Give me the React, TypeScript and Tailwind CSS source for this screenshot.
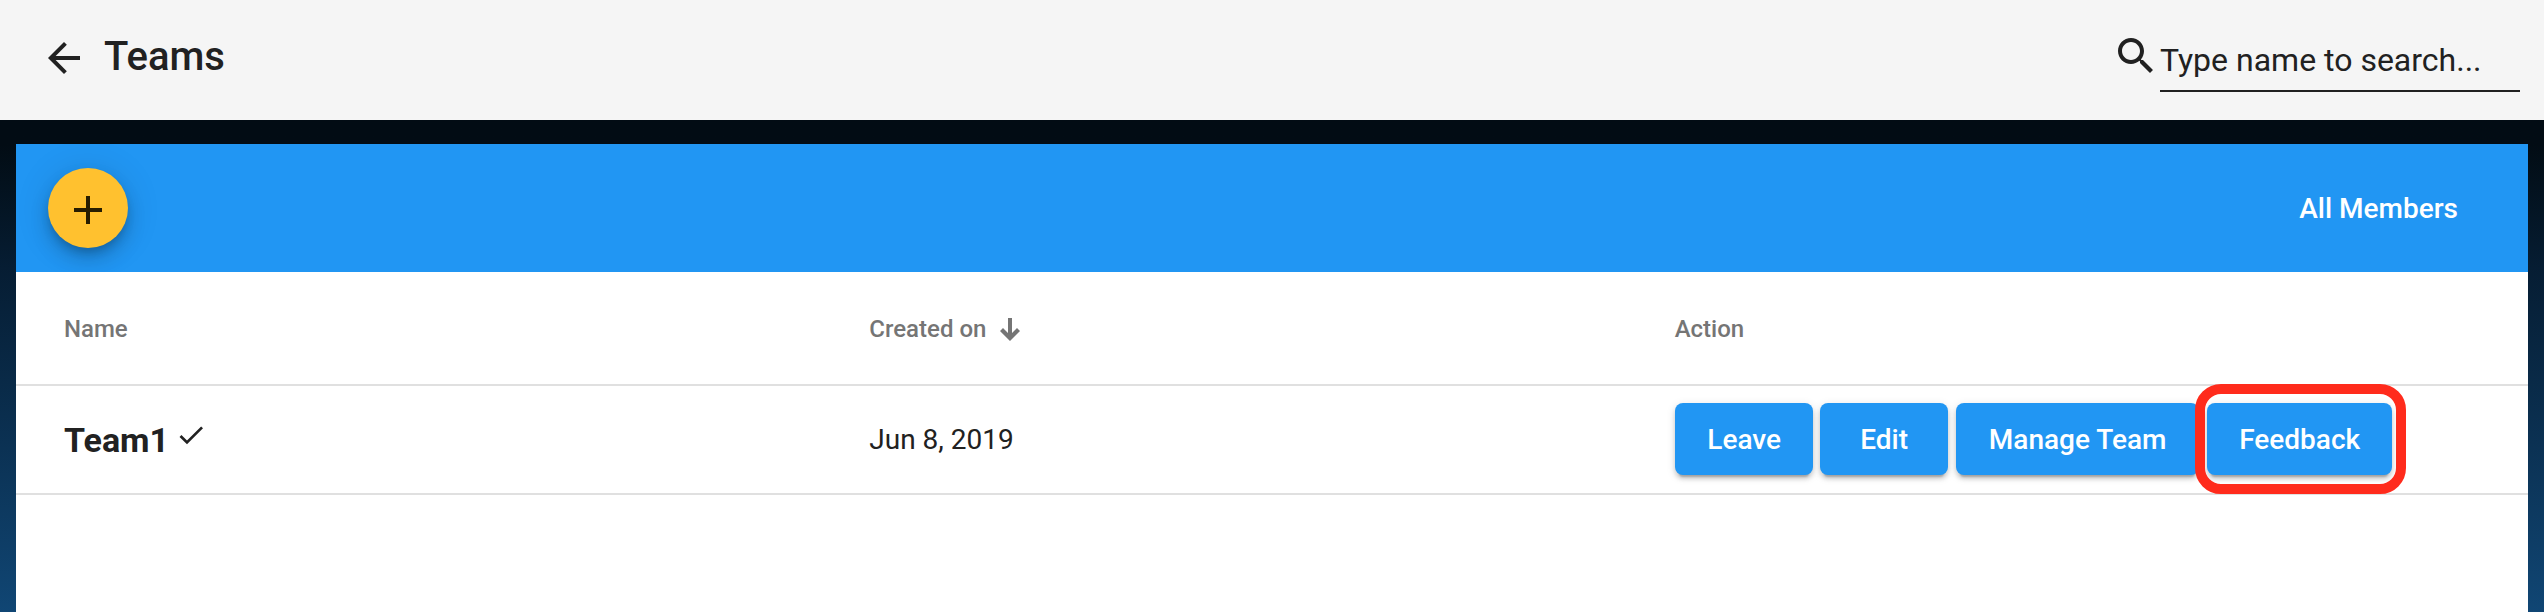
import React from "react";

function Icon({ d, className }: { d: string; className: string }) {
  return (
    <svg viewBox="0 0 24 24" fill="currentColor" className={className} aria-hidden="true">
      <path d={d} />
    </svg>
  );
}

const BACK = "M20 11H7.83l5.59-5.59L12 4l-8 8 8 8 1.41-1.41L7.83 13H20v-2z";
const SEARCH =
  "M15.5 14h-.79l-.28-.27C15.41 12.59 16 11.11 16 9.5 16 5.91 13.09 3 9.5 3S3 5.91 3 9.5 5.91 16 9.5 16c1.61 0 3.09-.59 4.23-1.57l.27.28v.79l5 4.99L20.49 19l-4.99-5zm-6 0C7.01 14 5 11.99 5 9.5S7.01 5 9.5 5 14 7.01 14 9.5 11.99 14 9.5 14z";
const ADD = "M19 13h-6v6h-2v-6H5v-2h6V5h2v6h6v2z";
const CHECK = "M9 16.17L4.83 12l-1.42 1.41L9 19 21 7l-1.41-1.41z";

function ActionButton({ label, width, children }: { label: string; width: string; children?: React.ReactNode }) {
  return (
    <div className={`relative shrink-0 ${width}`}>
      <button className="flex h-[72px] w-full items-center justify-center rounded-lg bg-[#2196f3] pt-px pl-px text-[28px] font-medium whitespace-nowrap text-white shadow-[0_6px_2px_-4px_rgba(0,0,0,0.2),0_4px_4px_0_rgba(0,0,0,0.14),0_2px_10px_0_rgba(0,0,0,0.12)]">
        {label}
      </button>
      {children}
    </div>
  );
}

export default function App() {
  return (
    <div className="flex h-[612px] w-[2544px] flex-col overflow-hidden bg-[#020c14] font-['Roboto',sans-serif] text-[#212121]">
      <header className="flex h-[120px] shrink-0 bg-[#f5f5f5] pr-6 pl-10">
        <Icon d={BACK} className="mt-[34px] size-12" />
        <h1 className="mt-[33px] ml-4 text-[40px] leading-[48px] font-medium">Teams</h1>
        <Icon d={SEARCH} className="mt-8 ml-auto size-12" />
        <div className="h-[92px] w-[360px] border-b-2 border-[#212121] pt-[40px] text-[32px] leading-[40px]">
          Type name to search...
        </div>
      </header>

      <div className="flex-1 bg-linear-to-b from-[#020c14] from-5% via-[#061d33] via-30% to-[#104674] to-100% px-4 pt-6">
        <main className="flex h-full flex-col bg-white">
          <div className="flex h-32 shrink-0 items-center justify-between overflow-hidden bg-[#2196f3] pr-[70px] pl-8">
            <button className="flex size-20 items-center justify-center rounded-full bg-[#ffc12f] pt-1 text-[#271d00] shadow-[0_6px_10px_-2px_rgba(0,0,0,0.2),0_12px_20px_0_rgba(0,0,0,0.14),0_2px_36px_0_rgba(0,0,0,0.12)]">
              <Icon d={ADD} className="size-12" />
            </button>
            <span className="pt-0.5 text-[28px] font-medium text-white">All Members</span>
          </div>

          <div className="grid h-[114px] shrink-0 grid-cols-3 items-center border-b-2 border-[#e0e0e0] px-12 pt-0.5 text-2xl font-medium text-[#757575]">
            <span>Name</span>
            <span className="flex items-center">
              Created on
              <svg viewBox="0 0 20 24" className="ml-[14px] h-6 w-5" fill="currentColor" aria-hidden="true">
                <path d="M8 1h4v15l5-5 3 3-10 10L0 14l3-3 5 5z" />
              </svg>
            </span>
            <span>Action</span>
          </div>

          <div className="grid h-[109px] shrink-0 grid-cols-3 items-center border-b-2 border-[#e0e0e0] px-12">
            <div className="flex items-center pt-0.5">
              <span className="text-[34px] font-bold">Team1</span>
              <Icon d={CHECK} className="mb-3 ml-1.5 size-8" />
            </div>
            <span className="text-[28px]">Jun 8, 2019</span>
            <div className="flex pb-px">
              <ActionButton label="Leave" width="w-[138px] mr-[7px]" />
              <ActionButton label="Edit" width="w-[128px] mr-[8px]" />
              <ActionButton label="Manage Team" width="w-[243px] mr-[8px]" />
              <ActionButton label="Feedback" width="w-[185px]">
                <div className="absolute -top-[19px] -left-3 h-[110px] w-[211px] rounded-[26px] border-10 border-[#ff2b1c]" />
              </ActionButton>
            </div>
          </div>
        </main>
      </div>
    </div>
  );
}
